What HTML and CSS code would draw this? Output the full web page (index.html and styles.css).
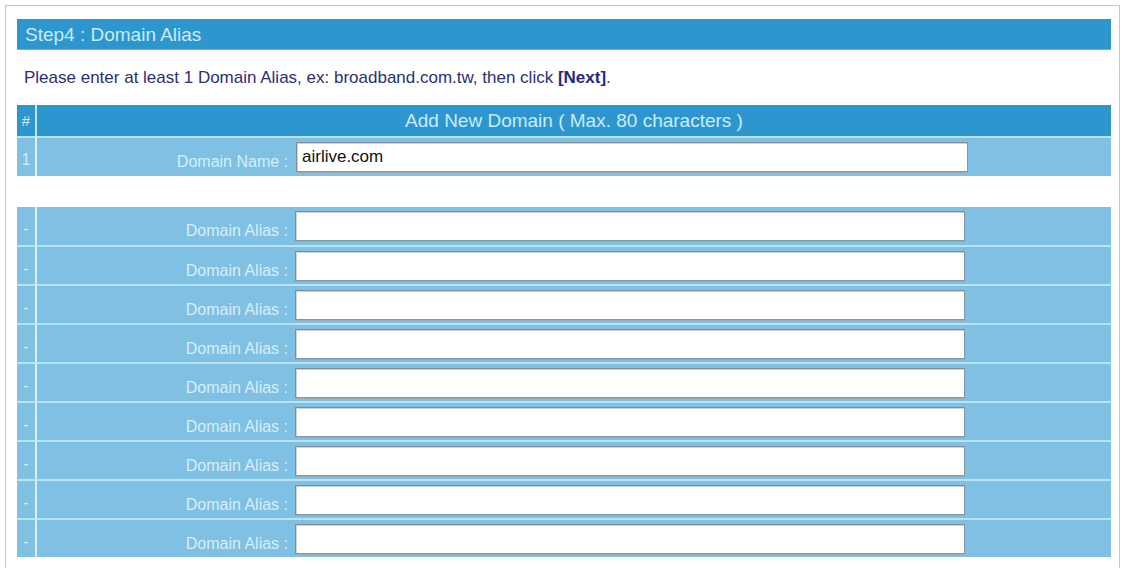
FILE: index.html
```html
<!DOCTYPE html>
<html>
<head>
<meta charset="utf-8">
<title>Step4 : Domain Alias</title>
<link rel="stylesheet" href="styles.css">
</head>
<body>
<div class="frame">
  <div class="step-bar">Step4 : Domain Alias</div>
  <p class="hint">Please enter at least 1 Domain Alias, ex: broadband.com.tw, then click <b>[Next]</b>.</p>
  <table class="grid">
    <colgroup>
      <col class="c-num">
      <col class="c-label">
      <col class="c-field">
      <col class="c-rest">
    </colgroup>
    <thead>
      <tr class="head">
        <th class="num">#</th>
        <th class="title" colspan="3">Add New Domain ( Max. 80 characters )</th>
      </tr>
    </thead>
    <tbody>
      <tr class="row tall">
        <td class="num">1</td>
        <td class="label">Domain Name :</td>
        <td class="field"><input class="txt wide" type="text" value="airlive.com"></td>
        <td class="rest"></td>
      </tr>
      <tr class="spacer"><td colspan="4"></td></tr>
      <tr class="row tall flush"><td class="num">-</td><td class="label">Domain Alias :</td><td class="field"><input class="txt" type="text"></td><td class="rest"></td></tr>
      <tr class="row"><td class="num">-</td><td class="label">Domain Alias :</td><td class="field"><input class="txt" type="text"></td><td class="rest"></td></tr>
      <tr class="row"><td class="num">-</td><td class="label">Domain Alias :</td><td class="field"><input class="txt" type="text"></td><td class="rest"></td></tr>
      <tr class="row"><td class="num">-</td><td class="label">Domain Alias :</td><td class="field"><input class="txt" type="text"></td><td class="rest"></td></tr>
      <tr class="row"><td class="num">-</td><td class="label">Domain Alias :</td><td class="field"><input class="txt" type="text"></td><td class="rest"></td></tr>
      <tr class="row"><td class="num">-</td><td class="label">Domain Alias :</td><td class="field"><input class="txt" type="text"></td><td class="rest"></td></tr>
      <tr class="row"><td class="num">-</td><td class="label">Domain Alias :</td><td class="field"><input class="txt" type="text"></td><td class="rest"></td></tr>
      <tr class="row"><td class="num">-</td><td class="label">Domain Alias :</td><td class="field"><input class="txt" type="text"></td><td class="rest"></td></tr>
      <tr class="row"><td class="num">-</td><td class="label">Domain Alias :</td><td class="field"><input class="txt" type="text"></td><td class="rest"></td></tr>
    </tbody>
  </table>
</div>
</body>
</html>
```

FILE: styles.css
```css
html, body {
  margin: 0;
  padding: 0;
  background: #ffffff;
  font-family: "Liberation Sans", Arial, sans-serif;
}

.frame {
  box-sizing: border-box;
  width: 1115px;
  min-height: 620px;
  margin: 5px 0 0 5px;
  border: 1px solid #c4c4c4;
  padding: 13px 8px 0 11px;
}

.step-bar {
  height: 31px;
  line-height: 31px;
  background: #2e96cf;
  color: #c8ecfb;
  font-size: 19px;
  padding-left: 8px;
  box-shadow: inset 0 -1px 0 #5fb3e0;
}

.hint {
  margin: 18px 0 17px 7px;
  font-size: 17px;
  line-height: 20px;
  color: #2d2f72;
}

.hint b {
  color: #1f2a82;
}

.grid {
  width: 100%;
  border-collapse: separate;
  border-spacing: 0;
  table-layout: fixed;
}

.c-num { width: 20px; }
.c-label { width: 256px; }
.c-field { width: 675px; }

.grid th,
.grid td {
  padding: 0;
}

.grid .num {
  border-right: 2px solid #d4f0fb;
  text-align: center;
  color: #cdeefb;
  font-size: 15px;
  font-weight: normal;
}

.head th {
  height: 31px;
  background: #2e96cf;
  font-weight: normal;
}

.head .num {
  border-right-color: #bfe6f8;
}

.head .title {
  color: #c8ecfb;
  font-size: 19px;
  text-align: center;
}

.row td {
  background: #80c0e2;
  border-top: 2px solid #b6e4f7;
  height: 37px;
}

.row.tall td {
  height: 38px;
}

.row.flush td {
  border-top: 0;
}

.row td.num {
  height: 31px;
  padding-top: 6px;
  font-size: 16px;
}

.row.tall td.num {
  height: 32px;
}

.row td.label {
  height: 27px;
  padding: 10px 5px 0 0;
  text-align: right;
  color: #d6eef9;
  font-size: 16px;
}

.row.tall td.label {
  height: 28px;
}

.row .field {
  padding-left: 2px;
}

.spacer td {
  height: 31px;
  background: #ffffff;
}

.txt {
  box-sizing: border-box;
  display: block;
  width: 670px;
  height: 30px;
  margin: 0;
  border: 1px solid #8797a2;
  border-top-color: #7d8e99;
  border-left-color: #7d8e99;
  box-shadow: inset 1px 1px 0 #c9d3d9, 0 1px 0 #9aaab4;
  background: #ffffff;
  padding: 0 0 0 5px;
  font-family: "Liberation Sans", Arial, sans-serif;
  font-size: 17px;
  color: #111111;
}

.txt.wide {
  width: 672px;
  margin-left: 1px;
}
```
